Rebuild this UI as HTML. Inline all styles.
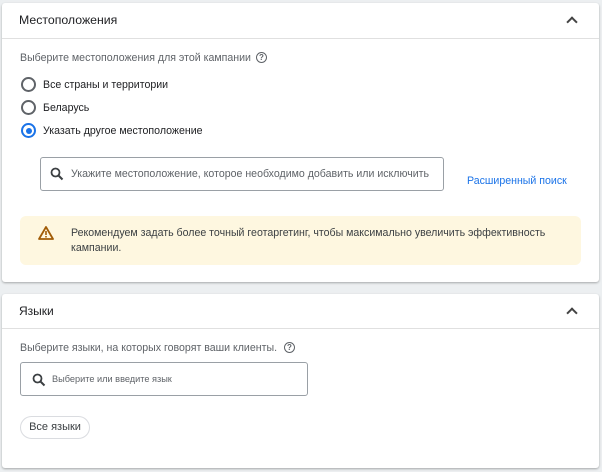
<!DOCTYPE html>
<html><head><meta charset="utf-8"><style>
*{margin:0;padding:0;box-sizing:border-box}
body{width:602px;height:472px;background:#eceff1;font-family:"Liberation Sans",sans-serif;color:#3c4043;position:relative;overflow:hidden}
.card{position:absolute;left:2px;width:597px;background:#fff;border-radius:3px;box-shadow:0 1px 2px rgba(0,0,0,.3)}
.abs{position:absolute;white-space:nowrap}
.hdr{font-size:12.3px;color:#202124}
.sep{position:absolute;left:0;right:0;height:1px;background:#e0e0e0}
.chev{position:absolute;width:8px;height:8px;border-left:2px solid #444;border-top:2px solid #444;transform:rotate(45deg)}
.rad{position:absolute;width:15px;height:15px;border:2px solid #5f6368;border-radius:50%}
.t12{font-size:10.6px}
.help{position:absolute;width:11px;height:11px;border:1.3px solid #5f6368;border-radius:50%;font-size:8px;line-height:9px;text-align:center;color:#5f6368;font-weight:bold}
</style></head><body>
<div class="card" style="top:3px;height:279px">
 <div class="abs hdr" style="left:17px;top:10px">Местоположения</div>
 <div class="chev" style="left:566px;top:15px"></div>
 <div class="sep" style="top:35px"></div>
 <div class="abs t12" style="left:18px;top:49px;color:#5f6368">Выберите местоположения для этой кампании</div>
 <div class="help" style="left:254px;top:49px">?</div>
 <div class="rad" style="left:19px;top:74px"></div>
 <div class="abs t12" style="left:41px;top:76px;color:#202124">Все страны и территории</div>
 <div class="rad" style="left:19px;top:97px"></div>
 <div class="abs t12" style="left:41px;top:99px;color:#202124">Беларусь</div>
 <div class="rad" style="left:19px;top:120px;border-color:#1a73e8"><div style="position:absolute;left:2.5px;top:2.5px;width:6px;height:6px;border-radius:50%;background:#1a73e8"></div></div>
 <div class="abs t12" style="left:41px;top:122px;color:#202124">Указать другое местоположение</div>
 <div style="position:absolute;left:38px;top:154px;width:404px;height:34px;border:1px solid #9aa0a6;border-radius:3px"></div>
 <svg style="position:absolute;left:48px;top:164px" width="14" height="14" viewBox="0 0 14 14"><circle cx="5.5" cy="5.5" r="4" fill="none" stroke="#3c4043" stroke-width="1.8"/><line x1="8.5" y1="8.5" x2="12.5" y2="12.5" stroke="#3c4043" stroke-width="2"/></svg>
 <div class="abs t12" style="left:69px;top:165px;color:#5f6368">Укажите местоположение, которое необходимо добавить или исключить</div>
 <div class="abs t12" style="left:465px;top:172px;color:#1a73e8">Расширенный поиск</div>
 <div style="position:absolute;left:18px;top:213px;width:561px;height:49px;background:#fef7e0;border-radius:6px"></div>
 <svg style="position:absolute;left:36px;top:223px" width="16" height="14" viewBox="0 0 16 14"><path d="M8 1 L15 13 L1 13 Z" fill="none" stroke="#a15c07" stroke-width="1.8" stroke-linejoin="round"/><rect x="7.2" y="5" width="1.6" height="4" fill="#a15c07"/><rect x="7.2" y="10" width="1.6" height="1.5" fill="#a15c07"/></svg>
 <div class="abs t12" style="left:69px;top:223px;color:#3c4043;line-height:15px">Рекомендуем задать более точный геотаргетинг, чтобы максимально увеличить эффективность<br>кампании.</div>
</div>
<div class="card" style="top:294px;height:174px">
 <div class="abs hdr" style="left:17px;top:10px;font-size:12px">Языки</div>
 <div class="chev" style="left:566px;top:15px"></div>
 <div class="sep" style="top:34px"></div>
 <div class="abs t12" style="left:18px;top:48px;color:#5f6368">Выберите языки, на которых говорят ваши клиенты.</div>
 <div class="help" style="left:282px;top:48px">?</div>
 <div style="position:absolute;left:18px;top:68px;width:288px;height:34px;border:1px solid #9aa0a6;border-radius:3px"></div>
 <svg style="position:absolute;left:30px;top:79px" width="14" height="14" viewBox="0 0 14 14"><circle cx="5.5" cy="5.5" r="4" fill="none" stroke="#3c4043" stroke-width="1.8"/><line x1="8.5" y1="8.5" x2="12.5" y2="12.5" stroke="#3c4043" stroke-width="2"/></svg>
 <div class="abs" style="left:50px;top:80px;font-size:9.2px;color:#5f6368">Выберите или введите язык</div>
 <div style="position:absolute;left:18px;top:122px;width:70px;height:23px;border:1px solid #dadce0;border-radius:12px;font-size:11px;line-height:21px;text-align:center;color:#3c4043">Все языки</div>
</div>
</body></html>
